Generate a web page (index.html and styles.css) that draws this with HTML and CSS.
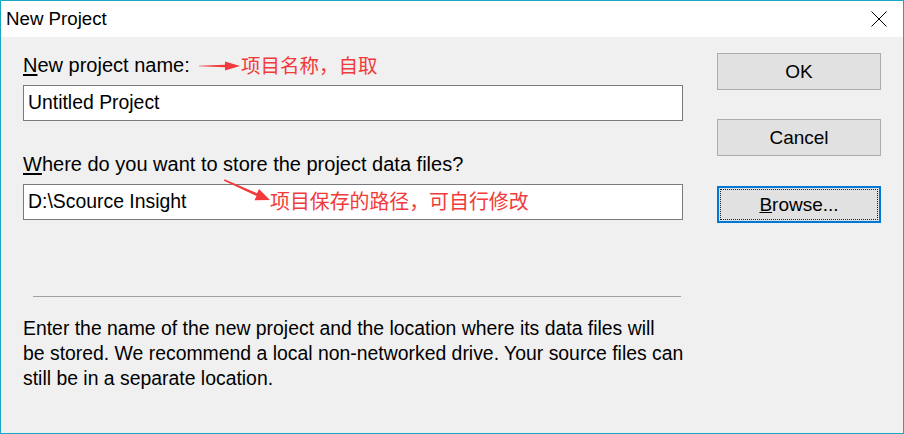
FILE: index.html
```html
<!DOCTYPE html>
<html>
<head>
<meta charset="utf-8">
<link rel="stylesheet" href="styles.css">
</head>
<body>
<div class="window">
  <div class="titlebar">
    <span class="title">New Project</span>
    <svg class="close" width="16" height="16" viewBox="0 0 16 16"><path d="M0.5 0.5 L15.5 15.5 M15.5 0.5 L0.5 15.5" stroke="#000" stroke-width="1" fill="none"/></svg>
  </div>
  <div class="content">
    <div class="main">
      <div class="field">
        <div class="label"><u>N</u>ew project name:</div>
        <div class="input">Untitled Project</div>
      </div>
      <div class="field field-second">
        <div class="label"><u>W</u>here do you want to store the project data files?</div>
        <div class="input">D:\Scource Insight</div>
      </div>
      <div class="sep"></div>
      <p class="desc">Enter the name of the new project and the location where its data files will<br>be stored. We recommend a local non-networked drive. Your source files can<br>still be in a separate location.</p>
    </div>
    <div class="buttons">
      <div class="btn">OK</div>
      <div class="btn">Cancel</div>
      <div class="btn btn-focus"><span class="focus-ring"><u>B</u>rowse...</span></div>
    </div>
  </div>

  <div class="note note-one">
    <svg class="arrow-one" width="42" height="12" viewBox="0 0 42 12"><polygon points="0,5.7 26,4.7 26,1.5 41,6 26,10.5 26,7.3 0,6.3" fill="#f23a3a"/></svg>
    <span class="note-text">项目名称，自取</span>
  </div>
  <div class="note note-two">
    <svg class="arrow-two" width="48" height="24" viewBox="0 0 48 24"><polygon points="0.5,0.3 33,14.2 35,10 46,21 30.5,21.2 32.5,17 -0.2,1.6" fill="#f23a3a"/></svg>
    <span class="note-text">项目保存的路径，可自行修改</span>
  </div>
</div>
</body>
</html>
```

FILE: styles.css
```css
html, body {
  margin: 0;
  padding: 0;
}
body {
  width: 904px;
  height: 434px;
  overflow: hidden;
  font-family: "Liberation Sans", Arial, sans-serif;
  color: #000;
}
.window {
  position: relative;
  width: 904px;
  height: 434px;
  box-sizing: border-box;
  border: 1px solid #1aa7c6;
  background: #f0f0f0;
  display: flex;
  flex-direction: column;
}
.titlebar {
  height: 36px;
  background: #fff;
  display: flex;
  align-items: center;
  justify-content: space-between;
  padding: 0 16px 0 5px;
  flex: none;
}
.title {
  font-size: 18.7px;
  line-height: 20px;
  margin-top: -1px;
}
.close {
  display: block;
}
.content {
  flex: 1;
  display: flex;
  padding: 16px 22px 0 22px;
  gap: 34px;
}
.main {
  width: 660px;
  flex: none;
}
.field {
  display: flex;
  flex-direction: column;
  gap: 8px;
}
.field-second {
  margin-top: 31px;
}
.label {
  font-size: 20px;
  line-height: 24px;
  height: 24px;
  white-space: nowrap;
}
.label u {
  text-underline-offset: 2px;
}
.input {
  height: 36px;
  box-sizing: border-box;
  border: 1px solid #7a7a7a;
  background: #fff;
  padding: 0 4px 2px 4px;
  font-size: 19.4px;
  display: flex;
  align-items: center;
}
.sep {
  margin: 76px 2px 0 10px;
  height: 1px;
  background: #a0a0a0;
}
.desc {
  margin: 19px 0 0 0;
  font-size: 19.4px;
  line-height: 25px;
  white-space: nowrap;
}
.buttons {
  width: 164px;
  flex: none;
  display: flex;
  flex-direction: column;
  gap: 29px;
}
.btn {
  height: 37px;
  box-sizing: border-box;
  border: 1px solid #adadad;
  background: #e1e1e1;
  display: flex;
  align-items: center;
  justify-content: center;
  font-size: 19px;
}
.btn-focus {
  border: 2px solid #0078d7;
  margin-top: 1px;
  padding: 1px;
  align-items: stretch;
  justify-content: stretch;
}
.focus-ring {
  flex: 1;
  border: 1px dotted #222;
  display: flex;
  align-items: center;
  justify-content: center;
}
.note {
  position: absolute;
  display: flex;
  align-items: center;
  color: #f23a3a;
  font-family: "Noto Sans CJK SC", "Liberation Sans", sans-serif;
  font-size: 19.5px;
  line-height: 24px;
  white-space: nowrap;
}
.note-one {
  left: 198px;
  top: 52px;
}
.note-one .arrow-one {
  margin-top: 2px;
}
.note-two {
  left: 223px;
  top: 178px;
  align-items: flex-start;
}
.note-two .note-text {
  margin-top: 10px;
  margin-left: -2px;
  font-size: 19.9px;
}
```
